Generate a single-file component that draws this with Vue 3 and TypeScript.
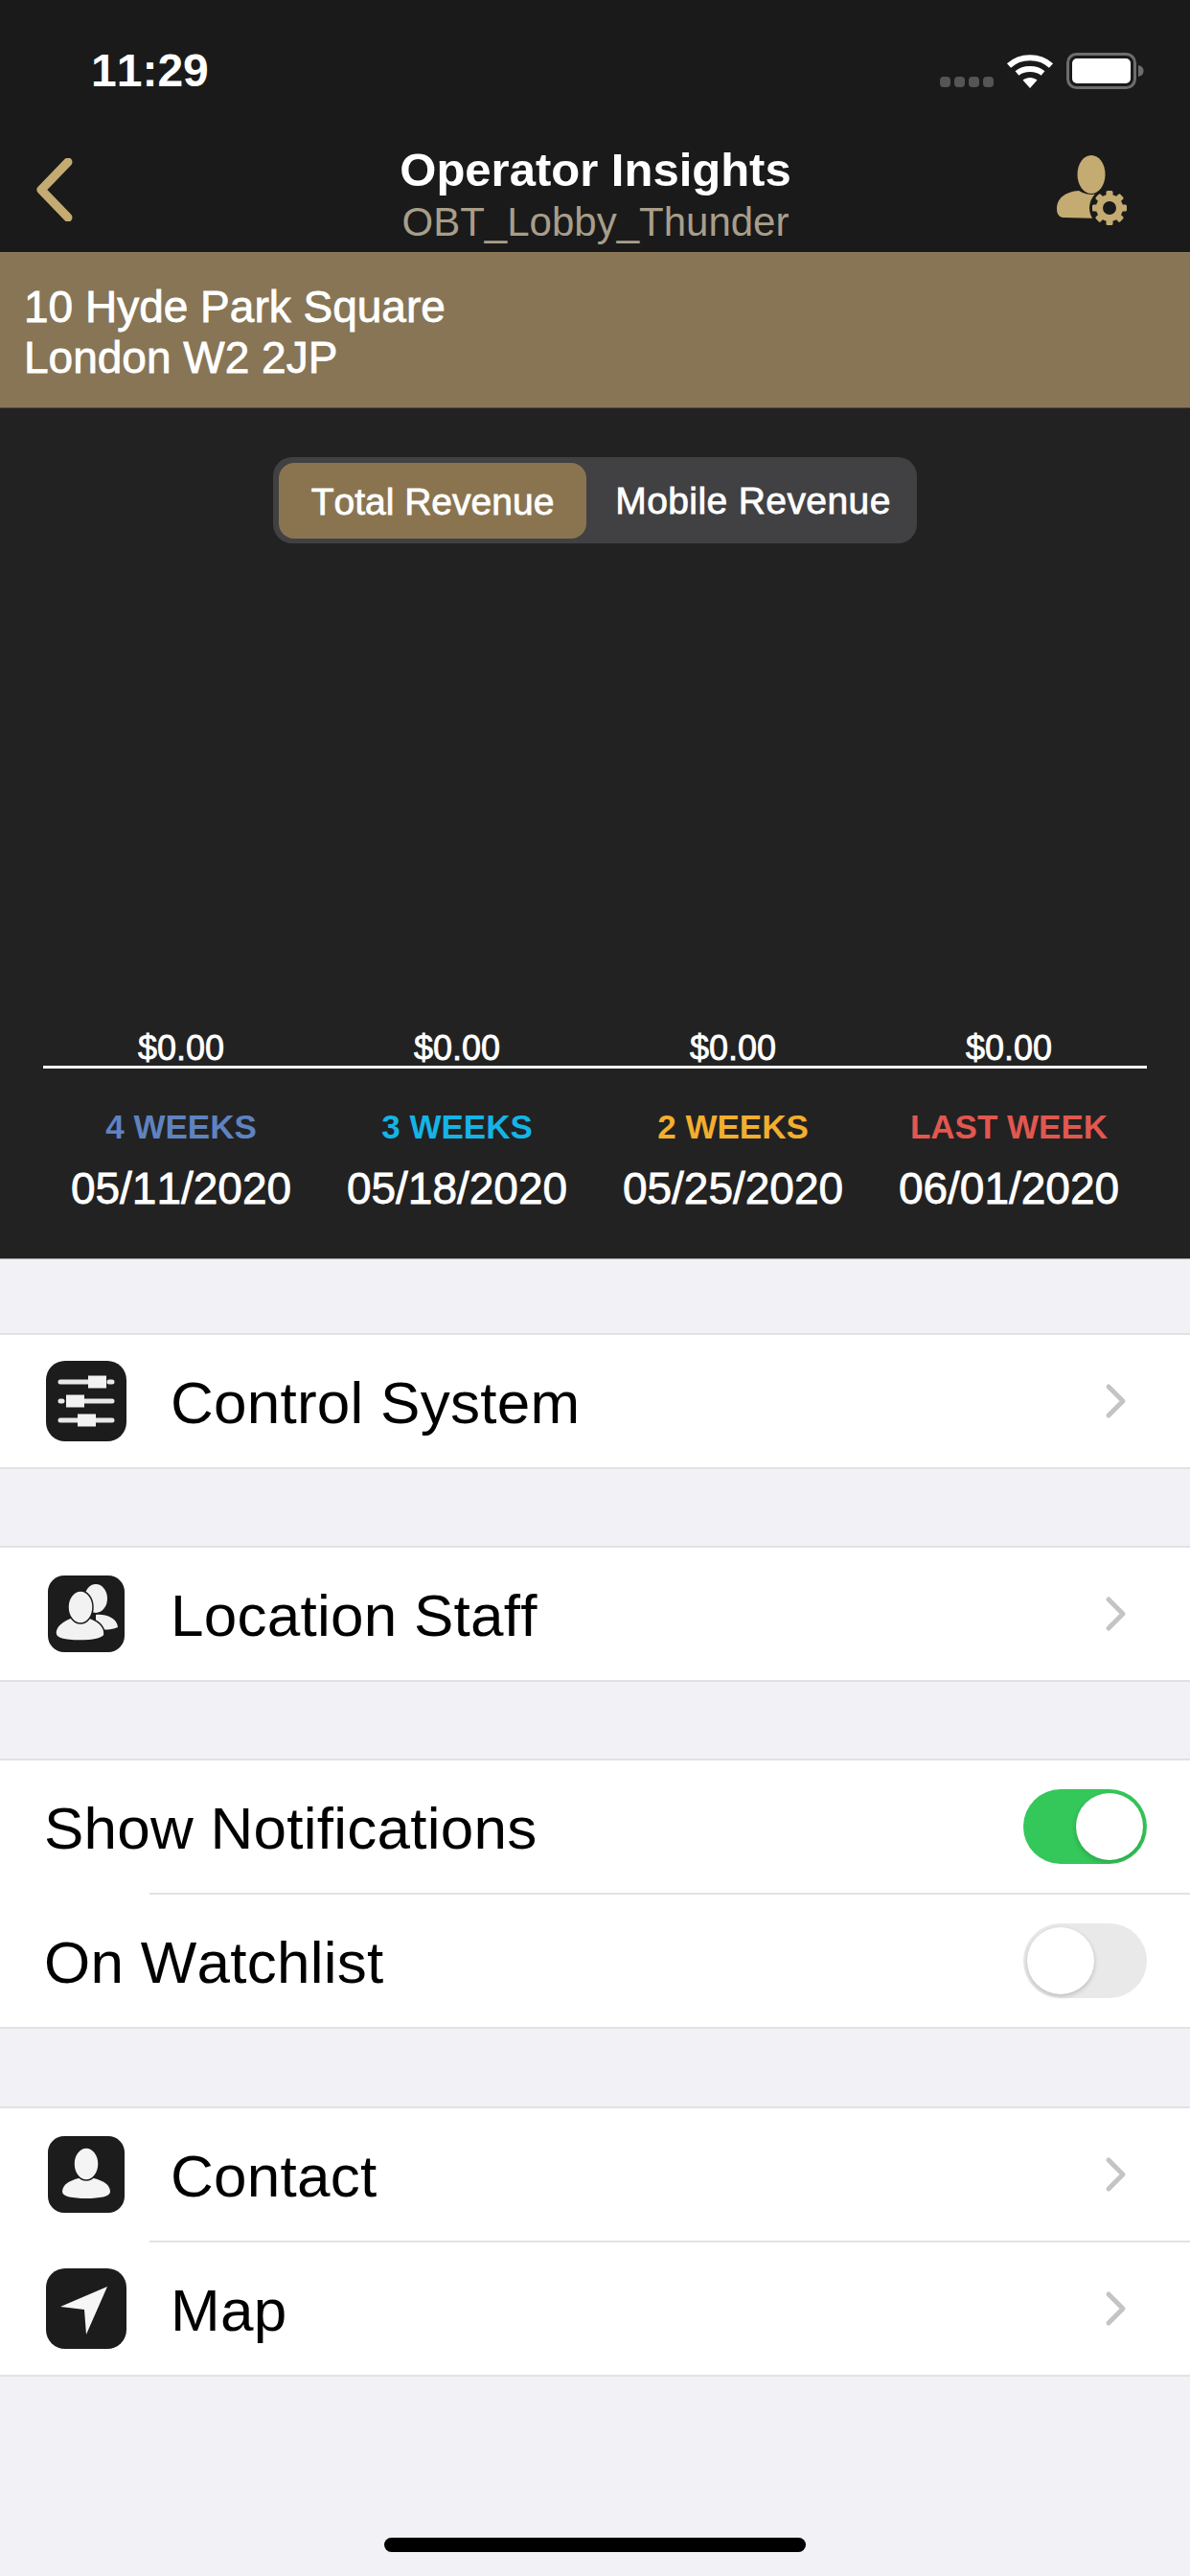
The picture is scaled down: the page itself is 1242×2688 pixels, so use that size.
<template>
  <div class="screen">
    <header class="top">
      <div class="status">
        <span class="time">11:29</span>
        <div class="status-icons">
          <div class="dots"><i></i><i></i><i></i><i></i></div>
          <svg class="wifi" width="50" height="38" viewBox="0 0 50 38">
            <path d="M3 13.5C15 2.5 35 2.5 47 13.5" fill="none" stroke="#fff" stroke-width="6" />
            <path d="M11.5 21.5C18.5 15.5 31.5 15.5 38.5 21.5" fill="none" stroke="#fff" stroke-width="6" />
            <path d="M17.5 28.5C22 25 28 25 32.5 28.5L25 37Z" fill="#fff" />
          </svg>
          <svg width="82" height="38" viewBox="0 0 82 38">
            <rect x="1.5" y="1.5" width="70" height="35" rx="9" fill="none" stroke="#6d6d6d" stroke-width="3" />
            <rect x="6" y="6" width="61" height="26" rx="5" fill="#fff" />
            <path d="M75 13C79 14 80.500 16 80.500 19S79 24 75 25Z" fill="#6d6d6d" />
          </svg>
        </div>
      </div>
      <nav class="nav">
        <svg class="back" width="42" height="66" viewBox="0 0 42 66">
          <path d="M35 4L7 33L35 62" fill="none" stroke="#c4ab72" stroke-width="9" stroke-linecap="round" stroke-linejoin="round" />
        </svg>
        <div class="titles">
          <div class="title">Operator Insights</div>
          <div class="subtitle">OBT_Lobby_Thunder</div>
        </div>
        <svg class="gear-user" width="76" height="76" viewBox="0 0 76 76">
          <ellipse cx="38" cy="22" rx="14.500" ry="20" fill="#c4ab72" />
          <path d="M2 58C2 46 12 40 25 39C33 44 43 44 49 40L49 68L8 67C4 66 2 63 2 58Z" fill="#c4ab72" />
          <circle cx="57" cy="57" r="21" fill="#1a1a1a" />
          <rect v-for="a in gearTeeth" :key="a" x="53.500" y="39" width="7" height="9" rx="1.500" fill="#c4ab72" :transform="`rotate(${a} 57 57)`" />
          <circle cx="57" cy="57" r="10.500" fill="none" stroke="#c4ab72" stroke-width="7" />
        </svg>
      </nav>
    </header>

    <div class="address">
      <div>10 Hyde Park Square</div>
      <div>London W2 2JP</div>
    </div>

    <section class="chart">
      <div class="segmented">
        <div class="seg seg-active">Total Revenue</div>
        <div class="seg seg-other">Mobile Revenue</div>
      </div>
      <div class="values">
        <div v-for="w in weeks" :key="w.date" class="value">$0.00</div>
      </div>
      <div class="axis"></div>
      <div class="weeks">
        <div v-for="w in weeks" :key="w.date" class="week">
          <div class="week-label" :style="{ color: w.color }">{{ w.label }}</div>
          <div class="week-date">{{ w.date }}</div>
        </div>
      </div>
    </section>

    <div class="group first">
      <div class="row">
        <svg class="icon" width="84" height="84" viewBox="0 0 84 84">
          <rect width="84" height="84" rx="20" fill="#1c1c1c" />
          <g stroke="#e8e8e8" stroke-width="5" stroke-linecap="round">
            <path d="M15 22H44M66 22H69M15 42H17M40 42H69M15 62H33M52 62H69" />
          </g>
          <g fill="#f2f2f2">
            <rect x="44" y="15.500" width="19" height="13" />
            <rect x="21" y="35.500" width="19" height="13" />
            <rect x="33" y="55.500" width="19" height="13" />
          </g>
        </svg>
        <span class="label">Control System</span>
        <svg class="chev" width="24" height="38" viewBox="0 0 24 38"><path d="M4 4L19 19L4 34" /></svg>
      </div>
    </div>

    <div class="group">
      <div class="row">
        <svg class="icon" width="84" height="80" viewBox="-2 0 84 80">
          <rect width="80" height="80" rx="17" fill="#1c1c1c" />
          <ellipse cx="50" cy="24" rx="12" ry="15" fill="#f2f2f2" />
          <path d="M50 41C60 40 72 44 73 54C66 57 58 57 50 56Z" fill="#f2f2f2" />
          <path d="M8 60C8 51 18 46 27 43H40C50 46 59 51 59 61C59 66 46 68 33 68C20 68 8 66 8 60Z" fill="#f2f2f2" stroke="#1c1c1c" stroke-width="1.500" />
          <ellipse cx="34" cy="33" rx="13" ry="17" fill="#f2f2f2" stroke="#1c1c1c" stroke-width="1.500" />
        </svg>
        <span class="label">Location Staff</span>
        <svg class="chev" width="24" height="38" viewBox="0 0 24 38"><path d="M4 4L19 19L4 34" /></svg>
      </div>
    </div>

    <div class="group">
      <div class="row plain">
        <span class="label">Show Notifications</span>
        <div class="toggle on"><div class="knob"></div></div>
      </div>
      <div class="divider"></div>
      <div class="row plain">
        <span class="label">On Watchlist</span>
        <div class="toggle"><div class="knob"></div></div>
      </div>
    </div>

    <div class="group last">
      <div class="row">
        <svg class="icon" width="84" height="80" viewBox="-2 0 84 80">
          <rect width="80" height="80" rx="17" fill="#1c1c1c" />
          <path d="M15 58C15 50 24 46 32 44H48C56 46 65 50 65 58C65 63 54 65 40 65C26 65 15 63 15 58Z" fill="#f4f4f4" />
          <ellipse cx="40" cy="29" rx="13" ry="17" fill="#f4f4f4" stroke="#1c1c1c" stroke-width="1.500" />
        </svg>
        <span class="label">Contact</span>
        <svg class="chev" width="24" height="38" viewBox="0 0 24 38"><path d="M4 4L19 19L4 34" /></svg>
      </div>
      <div class="divider"></div>
      <div class="row">
        <svg class="icon" width="84" height="84" viewBox="0 0 84 84">
          <rect width="84" height="84" rx="20" fill="#1c1c1c" />
          <path d="M64 19L15 40L40 43L42 69Z" fill="#f6f6f6" />
        </svg>
        <span class="label">Map</span>
        <svg class="chev" width="24" height="38" viewBox="0 0 24 38"><path d="M4 4L19 19L4 34" /></svg>
      </div>
    </div>

    <div class="home-bar"></div>
  </div>
</template>

<script setup lang="ts">
const gearTeeth = [0, 45, 90, 135, 180, 225, 270, 315]

const weeks = [
  { label: '4 WEEKS', date: '05/11/2020', color: '#5f83c0' },
  { label: '3 WEEKS', date: '05/18/2020', color: '#14b5e6' },
  { label: '2 WEEKS', date: '05/25/2020', color: '#f2ae2e' },
  { label: 'LAST WEEK', date: '06/01/2020', color: '#e2574f' },
]
</script>

<style>
html,
body {
  margin: 0;
  background: #f1f1f6;
}
</style>

<style scoped>
.screen {
  width: 1242px;
  height: 2688px;
  overflow: hidden;
  background: #f1f1f6;
  font-family: "Liberation Sans", Arial, sans-serif;
  font-kerning: none;
  color: #000;
}

.top {
  background: #1a1a1a;
  height: 263px;
  color: #fff;
}

.status {
  height: 130px;
  box-sizing: border-box;
  padding: 50px 47px 0 95px;
  display: flex;
  justify-content: space-between;
  align-items: flex-start;
}

.time {
  font-size: 48px;
  line-height: 48px;
  font-weight: 700;
}

.status-icons {
  display: flex;
  align-items: flex-start;
  gap: 13px;
  padding-top: 5px;
}

.dots {
  display: flex;
  gap: 4px;
  padding-top: 25px;
}

.dots i {
  width: 11px;
  height: 11px;
  border-radius: 4px;
  background: #555;
}

.nav {
  height: 133px;
  display: grid;
  grid-template-columns: 1fr auto 1fr;
  align-items: start;
  padding: 0 65px 0 36px;
}

.back {
  margin-top: 35px;
}

.titles {
  text-align: center;
  transform: translateX(15px);
}

.title {
  font-size: 49px;
  line-height: 60px;
  font-weight: 700;
  margin-top: 17px;
}

.subtitle {
  font-size: 42px;
  line-height: 50px;
  color: #a89e8a;
}

.gear-user {
  margin-top: 30px;
  justify-self: end;
}

.address {
  height: 163px;
  box-sizing: border-box;
  padding: 30px 0 0 25px;
  background: #877556;
  border-top: 1px solid #8f7c5b;
  border-bottom: 1px solid #5c5039;
  color: #fff;
  font-size: 46px;
  line-height: 53px;
  -webkit-text-stroke: 0.8px #fff;
}

.chart {
  height: 888px;
  box-sizing: border-box;
  padding: 51px 45px 0;
  background: #222;
  color: #fff;
  display: flex;
  flex-direction: column;
  border-bottom: 1px solid #9a9a9a;
}

.segmented {
  align-self: center;
  display: flex;
  align-items: center;
  width: 672px;
  height: 90px;
  box-sizing: border-box;
  padding: 0 6px;
  border-radius: 20px;
  background: #414143;
}

.seg {
  font-size: 39px;
  line-height: 81px;
  text-align: center;
  -webkit-text-stroke: 0.8px #fff;
  flex: 1;
}

.seg-other {
  padding-left: 9px;
  letter-spacing: 0.4px;
}

.seg-active {
  flex: none;
  width: 321px;
  height: 79px;
  border-radius: 16px;
  background: #8a7450;
}

.values {
  margin-top: 509px;
  display: grid;
  grid-template-columns: repeat(4, 288px);
}

.value {
  text-align: center;
  font-size: 36px;
  line-height: 36px;
  -webkit-text-stroke: 0.8px #fff;
}

.axis {
  height: 3px;
  background: #fff;
}

.weeks {
  display: grid;
  grid-template-columns: repeat(4, 288px);
  padding-top: 41px;
}

.week {
  text-align: center;
}

.week-label {
  font-size: 35px;
  line-height: 40px;
  font-weight: 700;
}

.week-date {
  margin-top: 19px;
  font-size: 46px;
  line-height: 50px;
  -webkit-text-stroke: 0.8px #fff;
}

.group {
  margin-top: 80px;
  background: #fff;
  border-top: 2px solid #e2e2e5;
  border-bottom: 2px solid #e2e2e5;
}

.first {
  margin-top: 77px;
}

.last {
  margin-top: 81px;
}

.row {
  height: 138px;
  display: flex;
  align-items: center;
  padding: 0 45px 0 48px;
}

.plain {
  padding-left: 46px;
  justify-content: space-between;
}

.icon {
  flex: none;
  margin-right: 46px;
}

.label {
  flex: 1;
  font-size: 62px;
  line-height: 70px;
  letter-spacing: 0.25px;
  padding-top: 3px;
}

.chev {
  flex: none;
  margin-right: 20px;
  fill: none;
  stroke: #c4c4c7;
  stroke-width: 5;
  stroke-linecap: round;
  stroke-linejoin: round;
}

.divider {
  height: 2px;
  margin-left: 156px;
  background: #e2e2e5;
}

.toggle {
  flex: none;
  width: 129px;
  height: 78px;
  box-sizing: border-box;
  padding: 4px;
  border-radius: 39px;
  background: #e9e9ea;
  display: flex;
}

.toggle.on {
  background: #34c759;
  justify-content: flex-end;
}

.knob {
  width: 70px;
  height: 70px;
  border-radius: 50%;
  background: #fff;
  box-shadow: 0 2px 5px rgba(0, 0, 0, 0.2);
}

.home-bar {
  width: 440px;
  height: 15px;
  margin: 168px auto 0;
  border-radius: 8px;
  background: #000;
}
</style>
